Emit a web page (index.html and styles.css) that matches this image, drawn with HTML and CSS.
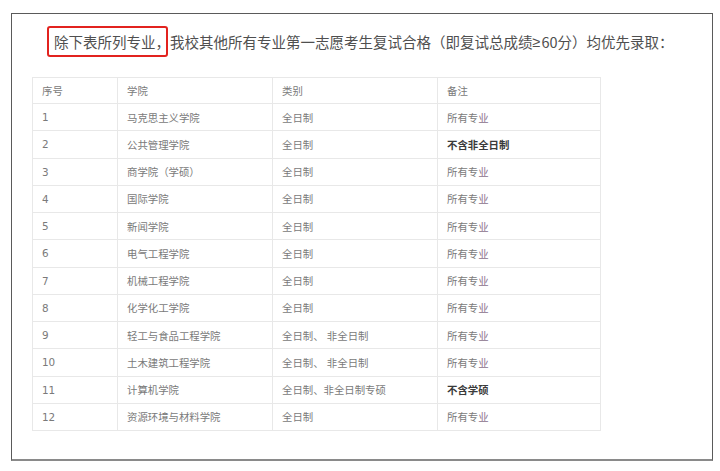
FILE: index.html
```html
<!DOCTYPE html>
<html lang="zh-CN">
<head>
<meta charset="utf-8">
<title>复试录取说明</title>
<link rel="stylesheet" href="styles.css">
</head>
<body>
<div class="frame">
  <p class="headline"><span class="mark">除下表所列专业，</span>我校其他所有专业第一志愿考生复试合格（即复试总成绩<span class="ge">≥</span>60分）均优先录取：</p>
  <table class="list">
    <colgroup>
      <col class="c1"><col class="c2"><col class="c3"><col class="c4">
    </colgroup>
    <thead>
      <tr><td>序号</td><td>学院</td><td>类别</td><td>备注</td></tr>
    </thead>
    <tbody>
      <tr><td>1</td><td>马克思主义学院</td><td>全日制</td><td>所有专<span class="v">业</span></td></tr>
      <tr><td>2</td><td>公共管理学院</td><td>全日制</td><td class="b">不含非全日制</td></tr>
      <tr><td>3</td><td>商学院（学硕）</td><td>全日制</td><td>所有专<span class="v">业</span></td></tr>
      <tr><td>4</td><td>国际学院</td><td>全日制</td><td>所有专<span class="v">业</span></td></tr>
      <tr><td>5</td><td>新闻学院</td><td>全日制</td><td>所有专<span class="v">业</span></td></tr>
      <tr><td>6</td><td>电气工程学院</td><td>全日制</td><td>所有专<span class="v">业</span></td></tr>
      <tr><td>7</td><td>机械工程学院</td><td>全日制</td><td>所有专<span class="v">业</span></td></tr>
      <tr><td>8</td><td>化学化工学院</td><td>全日制</td><td>所有专<span class="v">业</span></td></tr>
      <tr><td>9</td><td>轻工与食品工程学院</td><td>全日制、 非全日制</td><td>所有专<span class="v">业</span></td></tr>
      <tr><td>10</td><td>土木建筑工程学院</td><td>全日制、 非全日制</td><td>所有专<span class="v">业</span></td></tr>
      <tr><td>11</td><td>计算机学院</td><td>全日制、非全日制专硕</td><td class="b">不含学硕</td></tr>
      <tr><td>12</td><td>资源环境与材料学院</td><td>全日制</td><td>所有专<span class="v">业</span></td></tr>
    </tbody>
  </table>
</div>
</body>
</html>
```
FILE: styles.css
```css
html, body {
  margin: 0;
  padding: 0;
  background: #ffffff;
}
.frame {
  box-sizing: border-box;
  margin: 13px 0 0 11px;
  width: 702px;
  height: 448px;
  border: 1px solid #5a5a5a;
  border-bottom: 2px solid #8a8a8a;
  padding: 12px 0 0 20px;
}
.headline {
  margin: 0 0 0 15px;
  height: 31px;
  display: flex;
  align-items: center;
  white-space: nowrap;
  font-family: "Noto Sans CJK SC", sans-serif;
  font-size: 14.5px;
  color: #4f4f4f;
}
.ge {
  font-family: "Liberation Sans", sans-serif;
  margin-right: 1px;
}
.mark {
  box-sizing: border-box;
  display: inline-flex;
  align-items: center;
  height: 31px;
  width: 121px;
  padding-left: 5px;
  margin-right: 2px;
  border: 2px solid #e2231f;
  border-radius: 3px;
  overflow: visible;
}
.list {
  margin-top: 20px;
  width: 568px;
  border-collapse: collapse;
  table-layout: fixed;
  font-family: "DejaVu Sans", "Noto Sans CJK SC", sans-serif;
  font-size: 10.4px;
  color: #7a7a7a;
}
.c1 { width: 85px; }
.c2 { width: 155px; }
.c3 { width: 165px; }
.c4 { width: 163px; }
.list td {
  border: 1px solid #e8e8e8;
  padding: 0 0 0 9px;
  height: 26.25px;
  white-space: nowrap;
  vertical-align: middle;
}
.list thead td {
  height: 25px;
}
.list td.b {
  color: #3a3a3a;
  font-weight: bold;
}
.v {
  color: #8a6f8c;
}
```
